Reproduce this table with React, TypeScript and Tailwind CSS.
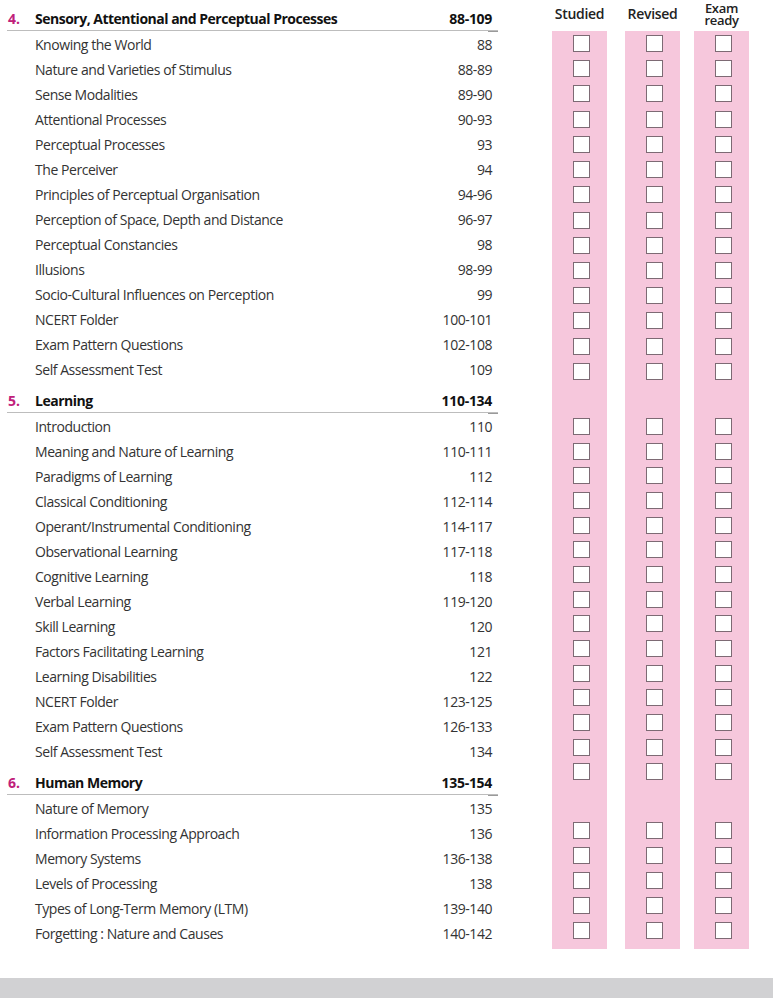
import React from "react";

type Section = { num: string; title: string; range: string; items: [string, string][] };

const sections: Section[] = [
  {
    num: "4.",
    title: "Sensory, Attentional and Perceptual Processes",
    range: "88-109",
    items: [
      ["Knowing the World", "88"],
      ["Nature and Varieties of Stimulus", "88-89"],
      ["Sense Modalities", "89-90"],
      ["Attentional Processes", "90-93"],
      ["Perceptual Processes", "93"],
      ["The Perceiver", "94"],
      ["Principles of Perceptual Organisation", "94-96"],
      ["Perception of Space, Depth and Distance", "96-97"],
      ["Perceptual Constancies", "98"],
      ["Illusions", "98-99"],
      ["Socio-Cultural Influences on Perception", "99"],
      ["NCERT Folder", "100-101"],
      ["Exam Pattern Questions", "102-108"],
      ["Self Assessment Test", "109"],
    ],
  },
  {
    num: "5.",
    title: "Learning",
    range: "110-134",
    items: [
      ["Introduction", "110"],
      ["Meaning and Nature of Learning", "110-111"],
      ["Paradigms of Learning", "112"],
      ["Classical Conditioning", "112-114"],
      ["Operant/Instrumental Conditioning", "114-117"],
      ["Observational Learning", "117-118"],
      ["Cognitive Learning", "118"],
      ["Verbal Learning", "119-120"],
      ["Skill Learning", "120"],
      ["Factors Facilitating Learning", "121"],
      ["Learning Disabilities", "122"],
      ["NCERT Folder", "123-125"],
      ["Exam Pattern Questions", "126-133"],
      ["Self Assessment Test", "134"],
    ],
  },
  {
    num: "6.",
    title: "Human Memory",
    range: "135-154",
    items: [
      ["Nature of Memory", "135"],
      ["Information Processing Approach", "136"],
      ["Memory Systems", "136-138"],
      ["Levels of Processing", "138"],
      ["Types of Long-Term Memory (LTM)", "139-140"],
      ["Forgetting : Nature and Causes", "140-142"],
    ],
  },
];

const font = { fontFamily: '"Open Sans", "Noto Sans", sans-serif' };

function Box() {
  return <div className="w-[17px] h-[17px] bg-white border border-[#7d6a74] shrink-0" />;
}

function Boxes({ n, className }: { n: number; className: string }) {
  return (
    <div className={className}>
      {Array.from({ length: n }).map((_, i) => (
        <Box key={i} />
      ))}
    </div>
  );
}

function Column({ label, className, two }: { label: React.ReactNode; className: string; two?: boolean }) {
  return (
    <div className={"flex flex-col w-[55px] " + className}>
      <div
        className={
          "h-[31px] flex items-center justify-center text-center font-semibold text-[#222] tracking-[-0.3px] " +
          (two ? "text-[13px] leading-[12px] pb-[3px]" : "text-[14px] leading-[18px] pb-[4px]")
        }
      >
        {label}
      </div>
      <div className="h-[918px] bg-[#f6c7dc] flex flex-col items-center pl-[4px] pt-[4px]">
        <Boxes n={14} className="flex flex-col gap-[8.23px]" />
        <Boxes n={15} className="flex flex-col gap-[7.7px] mt-[38px]" />
        <Boxes n={5} className="flex flex-col gap-[8px] mt-[42px]" />
      </div>
    </div>
  );
}

export default function App() {
  return (
    <div className="w-[776px] h-[1000px] bg-white overflow-hidden" style={font}>
      <div className="flex">
        <div className="w-[491px] ml-[7px] pt-[5px]">
          {sections.map((s, si) => (
            <div key={s.num} className={si > 0 ? "mt-[5px]" : ""}>
              <div className="relative h-[26px] pt-[2px] flex items-center border-b border-[#bdbdbd] pr-[6px]">
                <span className="w-[28px] pl-[1px] text-[14px] font-bold text-[#c0207a]">{s.num}</span>
                <span className="flex-1 text-[14px] font-bold text-[#111] tracking-[-0.5px]">{s.title}</span>
                <span className="text-[14px] font-bold text-[#111] tracking-[-0.3px]">{s.range}</span>
                <span className="absolute right-0 bottom-[-2px] w-[10px] h-[1px] bg-[#9a9a9a]" />
              </div>
              {s.items.map(([t, p], i) => (
                <div
                  key={i}
                  className={
                    "h-[25px] flex items-center pl-[28px] pr-[6px] text-[14px] text-[#333] tracking-[-0.45px] " +
                    (i === 0 ? "mt-[1px]" : "")
                  }
                >
                  <span className="flex-1">{t}</span>
                  <span>{p}</span>
                </div>
              ))}
            </div>
          ))}
        </div>
        <div className="flex ml-[54px]">
          <Column label="Studied" className="" />
          <Column label="Revised" className="ml-[18px]" />
          <Column
            two
            label={
              <span>
                Exam
                <br />
                ready
              </span>
            }
            className="ml-[14px]"
          />
        </div>
      </div>
      <div className="mt-[29px] w-[773px] h-[20px] bg-[#d1d1d3]" />
    </div>
  );
}
